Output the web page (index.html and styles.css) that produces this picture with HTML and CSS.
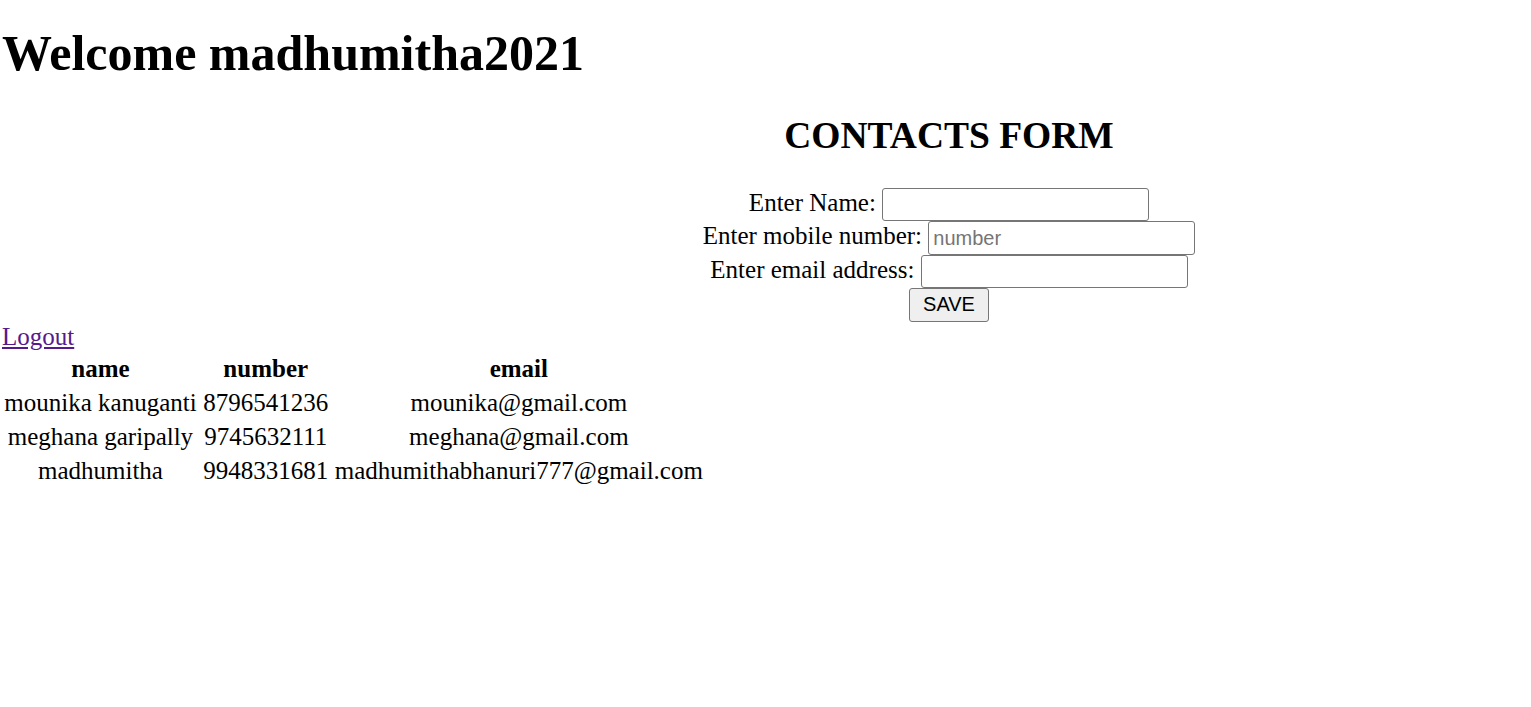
FILE: index.html
```html
<!DOCTYPE html>
<html>
<head>
<meta charset="utf-8">
<title>Contacts</title>
<link rel="stylesheet" href="styles.css">
</head>
<body>
<h1 class="welcome">Welcome madhumitha2021</h1>
<div class="form-wrap">
  <h2 class="form-title">CONTACTS FORM</h2>
  <form class="contact-form">
    <div class="row">Enter Name: <input class="field" type="text"></div>
    <div class="row">Enter mobile number: <input class="field" type="text" placeholder="number"></div>
    <div class="row">Enter email address: <input class="field" type="text"></div>
    <div class="row"><button class="save" type="button">SAVE</button></div>
  </form>
</div>
<a class="logout" href="#">Logout</a>
<table class="contacts">
  <thead>
    <tr><th>name</th><th>number</th><th>email</th></tr>
  </thead>
  <tbody>
    <tr><td>mounika kanuganti</td><td>8796541236</td><td>mounika@gmail.com</td></tr>
    <tr><td>meghana garipally</td><td>9745632111</td><td>meghana@gmail.com</td></tr>
    <tr><td>madhumitha</td><td>9948331681</td><td>madhumithabhanuri777@gmail.com</td></tr>
  </tbody>
</table>
</body>
</html>
```

FILE: styles.css
```css
html, body {
  background: #ffffff;
}
body {
  margin: 0;
  font-family: "Liberation Serif", "Times New Roman", serif;
  font-size: 25px;
  line-height: normal;
  color: #000000;
}
.welcome {
  font-size: 50px;
  font-weight: bold;
  margin: 24px 0 32px 2px;
}
.form-wrap {
  padding-left: 367px;
  text-align: center;
}
.form-title {
  font-size: 37.5px;
  font-weight: bold;
  margin: 0 0 31px 0;
}
.contact-form {
  margin: 0;
}
.row {
  text-align: center;
}
.field {
  box-sizing: border-box;
  width: 267px;
  height: 33.4px;
  font-family: "Liberation Sans", Arial, sans-serif;
  font-size: 20px;
  padding: 1px 4px;
  border: 1px solid #767676;
  border-radius: 3px;
  background: #ffffff;
  color: #000000;
  vertical-align: baseline;
}
.field::placeholder {
  color: #757575;
}
.save {
  box-sizing: border-box;
  width: 80px;
  height: 33.4px;
  padding: 0 6px;
  font-family: "Liberation Sans", Arial, sans-serif;
  font-size: 20px;
  color: #000000;
  background: #efefef;
  border: 1px solid #767676;
  border-radius: 3px;
}
.logout {
  display: block;
  width: max-content;
  color: #551a8b;
  text-decoration: underline;
  margin-top: 1px;
  padding-left: 2px;
}
.contacts {
  border-collapse: separate;
  border-spacing: 2.5px;
}
.contacts th,
.contacts td {
  padding: 2.1px 2.3px;
  text-align: center;
  font-size: 25px;
}
.contacts th {
  font-weight: bold;
}
```
